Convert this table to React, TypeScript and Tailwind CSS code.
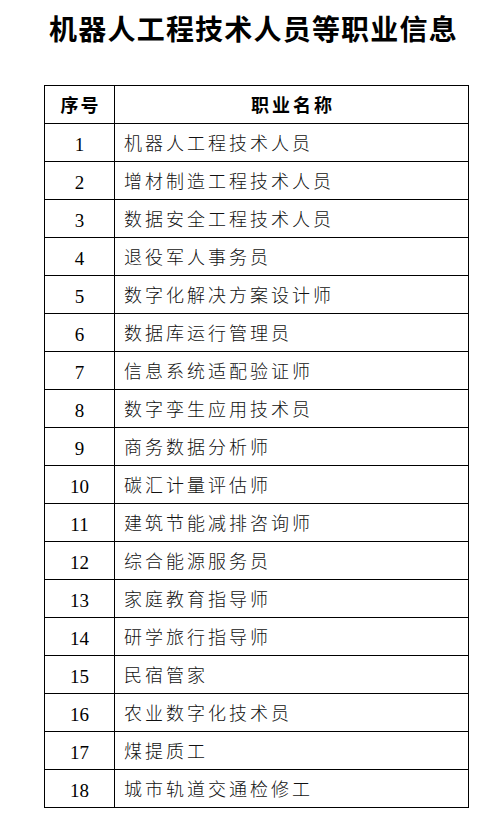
import React from "react";

const rows = [
  "机器人工程技术人员",
  "增材制造工程技术人员",
  "数据安全工程技术人员",
  "退役军人事务员",
  "数字化解决方案设计师",
  "数据库运行管理员",
  "信息系统适配验证师",
  "数字孪生应用技术员",
  "商务数据分析师",
  "碳汇计量评估师",
  "建筑节能减排咨询师",
  "综合能源服务员",
  "家庭教育指导师",
  "研学旅行指导师",
  "民宿管家",
  "农业数字化技术员",
  "煤提质工",
  "城市轨道交通检修工",
];

export default function App() {
  return (
    <div className="w-[503px] h-[827px] bg-white text-black font-['Noto_Sans_CJK_SC',sans-serif]">
      <div className="h-[85px] pt-[10px] pl-[4px] text-center text-[28px] leading-[36px] font-bold tracking-[1.2px]">
        机器人工程技术人员等职业信息
      </div>
      <table className="ml-[44px] w-[425px] border-collapse">
        <tbody>
          <tr className="h-[38px]">
            <td className="w-[70px] border border-black text-center text-[18px] font-bold tracking-[2px] pl-[2px]">
              序号
            </td>
            <td className="border border-black text-center text-[18px] font-bold tracking-[3px] pl-[3px]">
              职业名称
            </td>
          </tr>
          {rows.map((name, i) => (
            <tr key={i} className="h-[38px]">
              <td className="border border-black text-center text-[19px] leading-none pt-[3px] font-['Liberation_Serif',serif]">
                {i + 1}
              </td>
              <td className="border border-black pl-[9px] text-[18px] font-light tracking-[3px] text-[#111]">
                {name}
              </td>
            </tr>
          ))}
        </tbody>
      </table>
    </div>
  );
}
